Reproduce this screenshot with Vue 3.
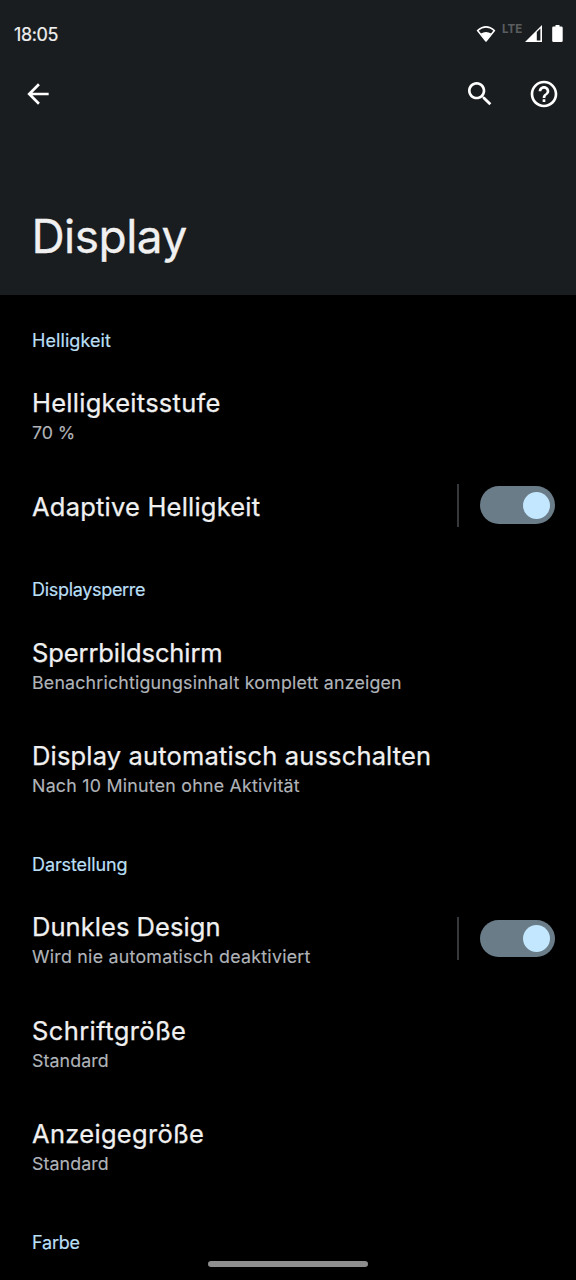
<script setup>
const sections = [
  {
    title: 'Helligkeit', spacing: 0.08,
    items: [
      { title: 'Helligkeitsstufe', spacing: 0.26, sub: '70 %', subSpacing: -0.1 },
      { title: 'Adaptive Helligkeit', spacing: 0.21, toggle: true }
    ]
  },
  {
    title: 'Displaysperre', spacing: -0.31,
    items: [
      { title: 'Sperrbildschirm', spacing: -0.1, sub: 'Benachrichtigungsinhalt komplett anzeigen', subSpacing: 0.19 },
      { title: 'Display automatisch ausschalten', spacing: 0.16, sub: 'Nach 10 Minuten ohne Aktivität', subSpacing: 0.24 }
    ]
  },
  {
    title: 'Darstellung', spacing: -0.1,
    items: [
      { title: 'Dunkles Design', spacing: 0.05, sub: 'Wird nie automatisch deaktiviert', subSpacing: 0.25, toggle: true },
      { title: 'Schriftgröße', spacing: 0.4, sub: 'Standard', subSpacing: 0.1 },
      { title: 'Anzeigegröße', spacing: 0.3, sub: 'Standard', subSpacing: 0.1 }
    ]
  },
  { title: 'Farbe', spacing: -0.2, items: [] }
]
const track = (v) => ({ letterSpacing: v + 'px' })
</script>

<template>
  <div class="screen">
    <header class="header">
      <div class="status">
        <span class="clock">18:05</span>
        <div class="status-icons">
          <svg class="wifi" viewBox="0 0 20 18">
            <path d="M1.6 5.5Q10-1.7 18.4 5.5L10 16Z" fill="none" stroke="#fff" stroke-width="1.6" stroke-linejoin="round" />
            <path d="M4.8 8.6Q10 5.2 15.2 8.6L10 16Z" fill="#fff" />
          </svg>
          <span class="lte">LTE</span>
          <svg class="signal" viewBox="0 0 17 17">
            <path fill-rule="evenodd" d="M0 17 17 0V17ZM11.8 7V15.4H15.4V3.5Z" fill="#fff" />
          </svg>
          <svg class="battery" viewBox="0 0 11 17">
            <path d="M3.5 0h4v1.6h1.9Q10.7 1.6 10.7 2.9V15.7Q10.7 17 9.4 17H1.5Q.2 17 .2 15.7V2.9Q.2 1.6 1.5 1.6h2Z" fill="#fff" />
          </svg>
        </div>
      </div>
      <nav class="toolbar">
        <svg class="icon" viewBox="0 0 24 24"><path d="M20 11H7.83l5.59-5.59L12 4l-8 8 8 8 1.41-1.41L7.83 13H20v-2z" /></svg>
        <div class="actions">
          <svg class="icon" viewBox="0 0 24 24"><path d="M15.5 14h-.79l-.28-.27C15.41 12.59 16 11.11 16 9.5 16 5.91 13.09 3 9.5 3S3 5.91 3 9.5 5.91 16 9.5 16c1.61 0 3.09-.59 4.23-1.57l.27.28v.79l5 4.99L20.49 19l-4.99-5zm-6 0C7.01 14 5 11.99 5 9.5S7.01 5 9.5 5 14 7.01 14 9.5 11.99 14 9.5 14z" /></svg>
          <svg class="icon" viewBox="0 0 24 24"><path d="M11 18h2v-2h-2v2zm1-16C6.48 2 2 6.48 2 12s4.48 10 10 10 10-4.48 10-10S17.52 2 12 2zm0 18c-4.41 0-8-3.59-8-8s3.59-8 8-8 8 3.59 8 8-3.59 8-8 8zm0-14c-2.21 0-4 1.79-4 4h2c0-1.1.9-2 2-2s2 .9 2 2c0 2-3 1.75-3 5h2c0-2.25 3-2.5 3-5 0-2.21-1.79-4-4-4z" /></svg>
        </div>
      </nav>
      <h1 class="title">Display</h1>
    </header>
    <main>
      <section v-for="section in sections" :key="section.title" class="section">
        <h2 class="section-title" :style="track(section.spacing)">{{ section.title }}</h2>
        <div v-for="item in section.items" :key="item.title" class="item" :class="{ single: !item.sub }">
          <div class="texts">
            <div class="item-title" :style="track(item.spacing)">{{ item.title }}</div>
            <div v-if="item.sub" class="item-sub" :style="track(item.subSpacing)">{{ item.sub }}</div>
          </div>
          <div v-if="item.toggle" class="control">
            <span class="divider"></span>
            <span class="switch"><span class="thumb"></span></span>
          </div>
        </div>
      </section>
    </main>
    <div class="home-bar"></div>
  </div>
</template>

<style>
body { background: #000; }
</style>

<style scoped>
.screen {
  position: relative;
  width: 576px;
  height: 1280px;
  overflow: hidden;
  background: #000;
  color: #f0f0f0;
  font-family: Inter, "Open Sans", sans-serif;
  white-space: nowrap;
}
.header {
  box-sizing: border-box;
  height: 295px;
  background: #1a1d1f;
}
.status {
  display: flex;
  justify-content: space-between;
  height: 61px;
  padding: 0 13px 0 14px;
}
.clock {
  padding-top: 24px;
  font-size: 18px;
  line-height: 22px;
  font-weight: 400;
  letter-spacing: -0.4px;
  -webkit-text-stroke: 0.2px currentColor;
}
.status-icons {
  display: flex;
  align-items: flex-start;
  padding-top: 25px;
}
.wifi { width: 20px; height: 18px; }
.lte {
  margin-left: 6px;
  width: 23px;
  margin-top: -1px;
  font-size: 11.5px;
  line-height: 11px;
  font-weight: 700;
  letter-spacing: 0;
  color: #5a5d5f;
}
.signal { width: 17px; height: 17px; }
.battery { width: 11px; height: 17px; margin-left: 10px; }
.toolbar {
  display: flex;
  align-items: center;
  justify-content: space-between;
  height: 65.2px;
  padding: 0 16px 0 21.6px;
}
.actions { display: flex; gap: 32px; }
.icon { display: block; width: 32px; height: 32px; fill: #fff; }
.title {
  margin: 79.4px 0 0 31.4px;
  font-size: 46px;
  line-height: 60px;
  font-weight: 400;
  letter-spacing: -0.5px;
  -webkit-text-stroke: 0.3px currentColor;
}
.section + .section { margin-top: -1.3px; }
.section-title {
  box-sizing: border-box;
  height: 69.3px;
  margin: 0;
  padding: 33.7px 0 0 32px;
  font-size: 18px;
  line-height: 24px;
  font-weight: 400;
  color: #b9dff5;
  -webkit-text-stroke: 0.2px currentColor;
}
.item {
  box-sizing: border-box;
  display: flex;
  align-items: center;
  justify-content: space-between;
  height: 103.4px;
  padding: 0 21.3px 3px 32px;
}
.item.single { height: 78px; }
.texts { align-self: flex-start; padding-top: 22px; }
.item-title {
  font-size: 25.5px;
  line-height: 34px;
  -webkit-text-stroke: 0.25px currentColor;
}
.item-sub {
  font-size: 17.8px;
  line-height: 26px;
  color: #b0b4b9;
  -webkit-text-stroke: 0.15px currentColor;
}
.control { display: flex; align-items: center; gap: 21px; }
.divider { width: 2px; height: 43px; background: #36393b; }
.switch {
  box-sizing: border-box;
  display: flex;
  align-items: center;
  justify-content: flex-end;
  width: 75px;
  height: 37.6px;
  padding-right: 5.1px;
  border-radius: 19px;
  background: #6a7c88;
}
.thumb { width: 27px; height: 27px; border-radius: 50%; background: #c2e7ff; }
.home-bar {
  position: absolute;
  left: 208px;
  bottom: 13.3px;
  width: 160px;
  height: 5.4px;
  border-radius: 3px;
  background: #8e8e8e;
}
</style>
